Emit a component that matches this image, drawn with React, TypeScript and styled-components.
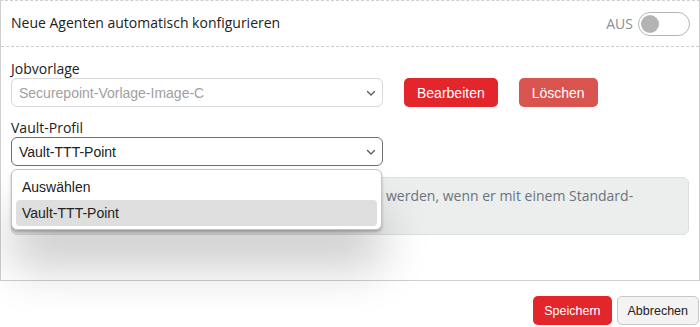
import React from 'react';
import styled, { createGlobalStyle } from 'styled-components';

const GlobalStyle = createGlobalStyle`
  html, body {
    margin: 0;
    padding: 0;
    background: #fff;
  }
`;

const Page = styled.div`
  width: 700px;
  height: 327px;
  overflow: hidden;
  font-family: 'Open Sans', 'Noto Sans', sans-serif;
  color: #222;
`;

const Panel = styled.div`
  border: 1px solid #cfcfcf;
  border-top: 1px dashed #cfcfcf;
  height: 281px;
  box-sizing: border-box;
`;

const Header = styled.div`
  height: 45px;
  display: flex;
  align-items: center;
  justify-content: space-between;
  padding: 0 9px 0 10px;
  border-bottom: 1px dashed #cfcfcf;
  font-size: 14px;
`;

const Title = styled.span`
  margin-top: -3px;
`;

const ToggleWrap = styled.div`
  display: flex;
  align-items: center;
  gap: 5px;
  color: #8a8f96;
  font-size: 14px;
`;

const Track = styled.div<{ on?: boolean }>`
  width: 46px;
  height: 22px;
  border: 1px solid #b5b5b5;
  border-radius: 12px;
  background: ${p => (p.on ? '#e3262c' : '#fff')};
  display: flex;
  align-items: center;
  padding: 0 2px;
`;

const Knob = styled.div`
  width: 18px;
  height: 18px;
  border-radius: 50%;
  background: #b3b3b3;
`;

const Body = styled.div`
  padding: 12px 10px 0 10px;
`;

const Label = styled.div<{ gap?: number }>`
  font-size: 14px;
  line-height: 19px;
  margin-top: ${p => p.gap ?? 0}px;
`;

const Row = styled.div`
  display: flex;
  align-items: center;
  gap: 21px;
`;

const SelectWrap = styled.div`
  position: relative;
  width: 372px;
`;

const SelectBox = styled.div<{ disabled?: boolean; focused?: boolean }>`
  height: 29px;
  box-sizing: border-box;
  border: 1px solid ${p => (p.focused ? '#6e6e6e' : '#d8d8d8')};
  border-radius: 6px;
  display: flex;
  align-items: center;
  justify-content: space-between;
  padding: 0 6px 0 7px;
  font-family: 'Liberation Sans', Arial, sans-serif;
  font-size: 14px;
  color: ${p => (p.disabled ? '#a0a0a0' : '#222')};
  background: #fff;
`;

const Button = styled.button<{ variant: 'primary' | 'danger' | 'default'; small?: boolean }>`
  height: 29px;
  padding: 0 ${p => (p.small ? 10 : 12)}px;
  border-radius: 5px;
  font-family: 'Liberation Sans', Arial, sans-serif;
  font-size: ${p => (p.small ? 12.5 : 14)}px;
  cursor: pointer;
  border: 1px solid
    ${p => (p.variant === 'default' ? '#c8c8c8' : 'transparent')};
  background: ${p =>
    p.variant === 'primary' ? '#e3262c' : p.variant === 'danger' ? '#d9534f' : '#f3f3f3'};
  color: ${p => (p.variant === 'default' ? '#222' : '#fff')};
`;

const Menu = styled.div`
  position: absolute;
  top: calc(100% + 3px);
  left: 0;
  width: 371px;
  box-sizing: border-box;
  background: #fff;
  border: 1px solid #c4c4c4;
  border-radius: 6px;
  padding: 4px 4px 3px 4px;
  z-index: 5;
  box-shadow: 0 2px 3px rgba(0, 0, 0, 0.25), 0 38px 48px rgba(0, 0, 0, 0.2);
  font-family: 'Liberation Sans', Arial, sans-serif;
  font-size: 14px;
`;

const Option = styled.div<{ active?: boolean }>`
  height: 26px;
  display: flex;
  align-items: center;
  padding: 0 6px;
  border-radius: 4px;
  background: ${p => (p.active ? '#dedede' : 'transparent')};
  color: #222;
`;

const InfoBox = styled.div`
  margin-top: 11px;
  background: #eceeee;
  border: 1px solid #dcdfe0;
  border-radius: 6px;
  padding: 8px 10px 8px 4px;
  font-size: 14px;
  line-height: 20px;
  color: #6a737e;
  height: 40px;
`;

const Footer = styled.div`
  display: flex;
  justify-content: flex-end;
  gap: 5px;
  padding: 15px 1px 0 0;
`;

const Chevron = () => (
  <svg width="10" height="6" viewBox="0 0 10 6" fill="none">
    <path d="M1.5 1.5l3.5 3.5 3.5-3.5" stroke="#555" strokeWidth="1.2" strokeLinecap="round" strokeLinejoin="round" />
  </svg>
);

export default function App() {
  return (
    <Page>
      <GlobalStyle />
      <Panel>
        <Header>
          <Title>Neue Agenten automatisch konfigurieren</Title>
          <ToggleWrap>
            AUS
            <Track>
              <Knob />
            </Track>
          </ToggleWrap>
        </Header>
        <Body>
          <Label>Jobvorlage</Label>
          <Row>
            <SelectWrap>
              <SelectBox disabled>
                Securepoint-Vorlage-Image-C
                <Chevron />
              </SelectBox>
            </SelectWrap>
            <Button variant="primary">Bearbeiten</Button>
            <Button variant="danger">Löschen</Button>
          </Row>
          <Label gap={11}>Vault-Profil</Label>
          <SelectWrap>
            <SelectBox focused>
              Vault-TTT-Point
              <Chevron />
            </SelectBox>
            <Menu>
              <Option>Auswählen</Option>
              <Option active>Vault-TTT-Point</Option>
            </Menu>
          </SelectWrap>
          <InfoBox>
            Der neue Agent kann nur dann automatisch konfiguriert werden, wenn er mit einem
            Standard-Jobprofil verknüpft ist.
          </InfoBox>
        </Body>
      </Panel>
      <Footer>
        <Button variant="primary" small>
          Speichern
        </Button>
        <Button variant="default" small>
          Abbrechen
        </Button>
      </Footer>
    </Page>
  );
}
